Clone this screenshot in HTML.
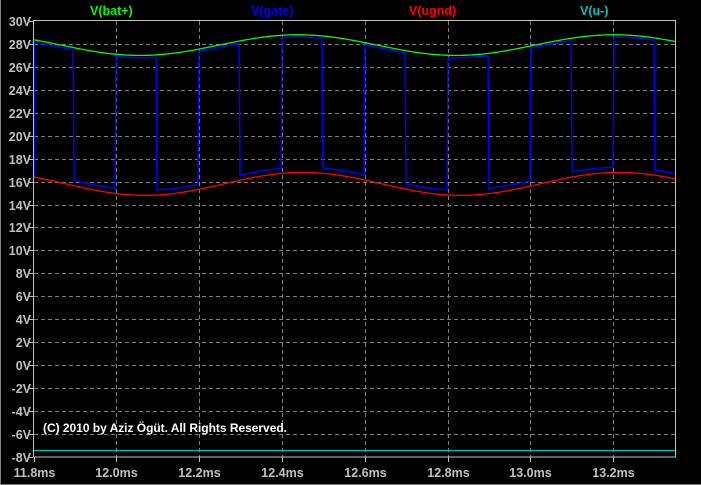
<!DOCTYPE html>
<html><head><meta charset="utf-8"><style>
html,body{margin:0;padding:0;background:#000;}
body{width:701px;height:485px;overflow:hidden;position:relative;}
svg{position:absolute;left:0;top:0;}
text{font-family:"Liberation Sans",sans-serif;font-weight:bold;}
</style></head><body>
<svg id="s" width="701" height="485" xmlns="http://www.w3.org/2000/svg">
<rect x="0" y="0" width="701" height="485" fill="#000"/>
<line x1="0.5" y1="0" x2="0.5" y2="485" stroke="#808080"/>
<line x1="0" y1="484.5" x2="701" y2="484.5" stroke="#808080"/>
<g id="grid"></g>
<g id="labels" font-size="12.5" fill="#c0c0c0"></g>
<text x="90" y="15" font-size="12.5" fill="#00ff00">V(bat+)</text>
<text x="251" y="15" font-size="12.5" fill="#0000ff">V(gate)</text>
<text x="409" y="15" font-size="12.5" fill="#ff0000">V(ugnd)</text>
<text x="580" y="15" font-size="12.5" fill="#00c0c0">V(u-)</text>
<g id="traces"></g>
<rect x="33.5" y="20.5" width="642" height="436.5" fill="none" stroke="#c0c0c0" stroke-width="1"/>
<text x="43" y="432" font-size="12" fill="#ffffff" textLength="244">(C) 2010 by Aziz Ögüt. All Rights Reserved.</text>
</svg>
<script>
var NS="http://www.w3.org/2000/svg";
function el(p,t,a){var e=document.createElementNS(NS,t);for(var k in a)e.setAttribute(k,a[k]);p.appendChild(e);return e;}
var g=document.getElementById('grid'),L=document.getElementById('labels'),T=document.getElementById('traces');
function Y(v){return 21+(30-v)*11.47;}
for(var v=30;v>=-8;v-=2){var y=Math.round(Y(v))+0.5;
 if(v<30&&v>-8)el(g,'line',{x1:34,y1:y,x2:675,y2:y,stroke:'#808080','stroke-dasharray':'4,3'});
 el(g,'line',{x1:29,y1:y,x2:33,y2:y,stroke:'#c0c0c0'});
 var t=el(L,'text',{x:31,y:y+4.5,'text-anchor':'end'});t.textContent=v+'V';}
var xl=['11.8ms','12.0ms','12.2ms','12.4ms','12.6ms','12.8ms','13.0ms','13.2ms'];
for(var i=0;i<8;i++){var x=Math.round(33.5+i*82.8)+0.5;
 if(i>0)el(g,'line',{x1:x,y1:21,x2:x,y2:457,stroke:'#808080','stroke-dasharray':'4,3'});
 el(g,'line',{x1:x,y1:457,x2:x,y2:462,stroke:'#c0c0c0'});
 var t=el(L,'text',{x:x,y:477,'text-anchor':'middle'});t.textContent=xl[i];}
function gr(x){return 27.9-0.9*Math.cos(2*Math.PI*(x-140)/316);}
function rd(x){return 15.8-1.0*Math.cos(2*Math.PI*(x-145)/316);}
function path(f,c){var d='';for(var x=34;x<=675;x+=1){d+=(x==34?'M':'L')+x+' '+Y(f(x)).toFixed(1);}el(T,'path',{d:d,fill:'none',stroke:c,'stroke-width':1.3});}
var falls=[74,157,240,323,406,489,572,655],rises=[116,199,282,365,448,531,614];
function high(x){ if(x<74)return true; for(var k=0;k<falls.length;k++){var f=falls[k],r=rises[k]||9999; if(x>=f&&x<r)return false; if(x>=r&&x<(falls[k+1]||9999))return true;} return true;}
var d='M34 '+Y(16.5).toFixed(1);
for(var x=34;x<=675;x++){var v=high(x)?gr(x)-0.2:rd(x)+0.45;d+='L'+x+' '+Y(v).toFixed(1);}
el(T,'path',{d:d,fill:'none',stroke:'#0000ff','stroke-width':1.5});
path(gr,'#00ff00');path(rd,'#ff0000');
el(T,'line',{x1:34,y1:450.5,x2:675,y2:450.5,stroke:'#00c0c0','stroke-width':1.3});
</script>
</body></html>
